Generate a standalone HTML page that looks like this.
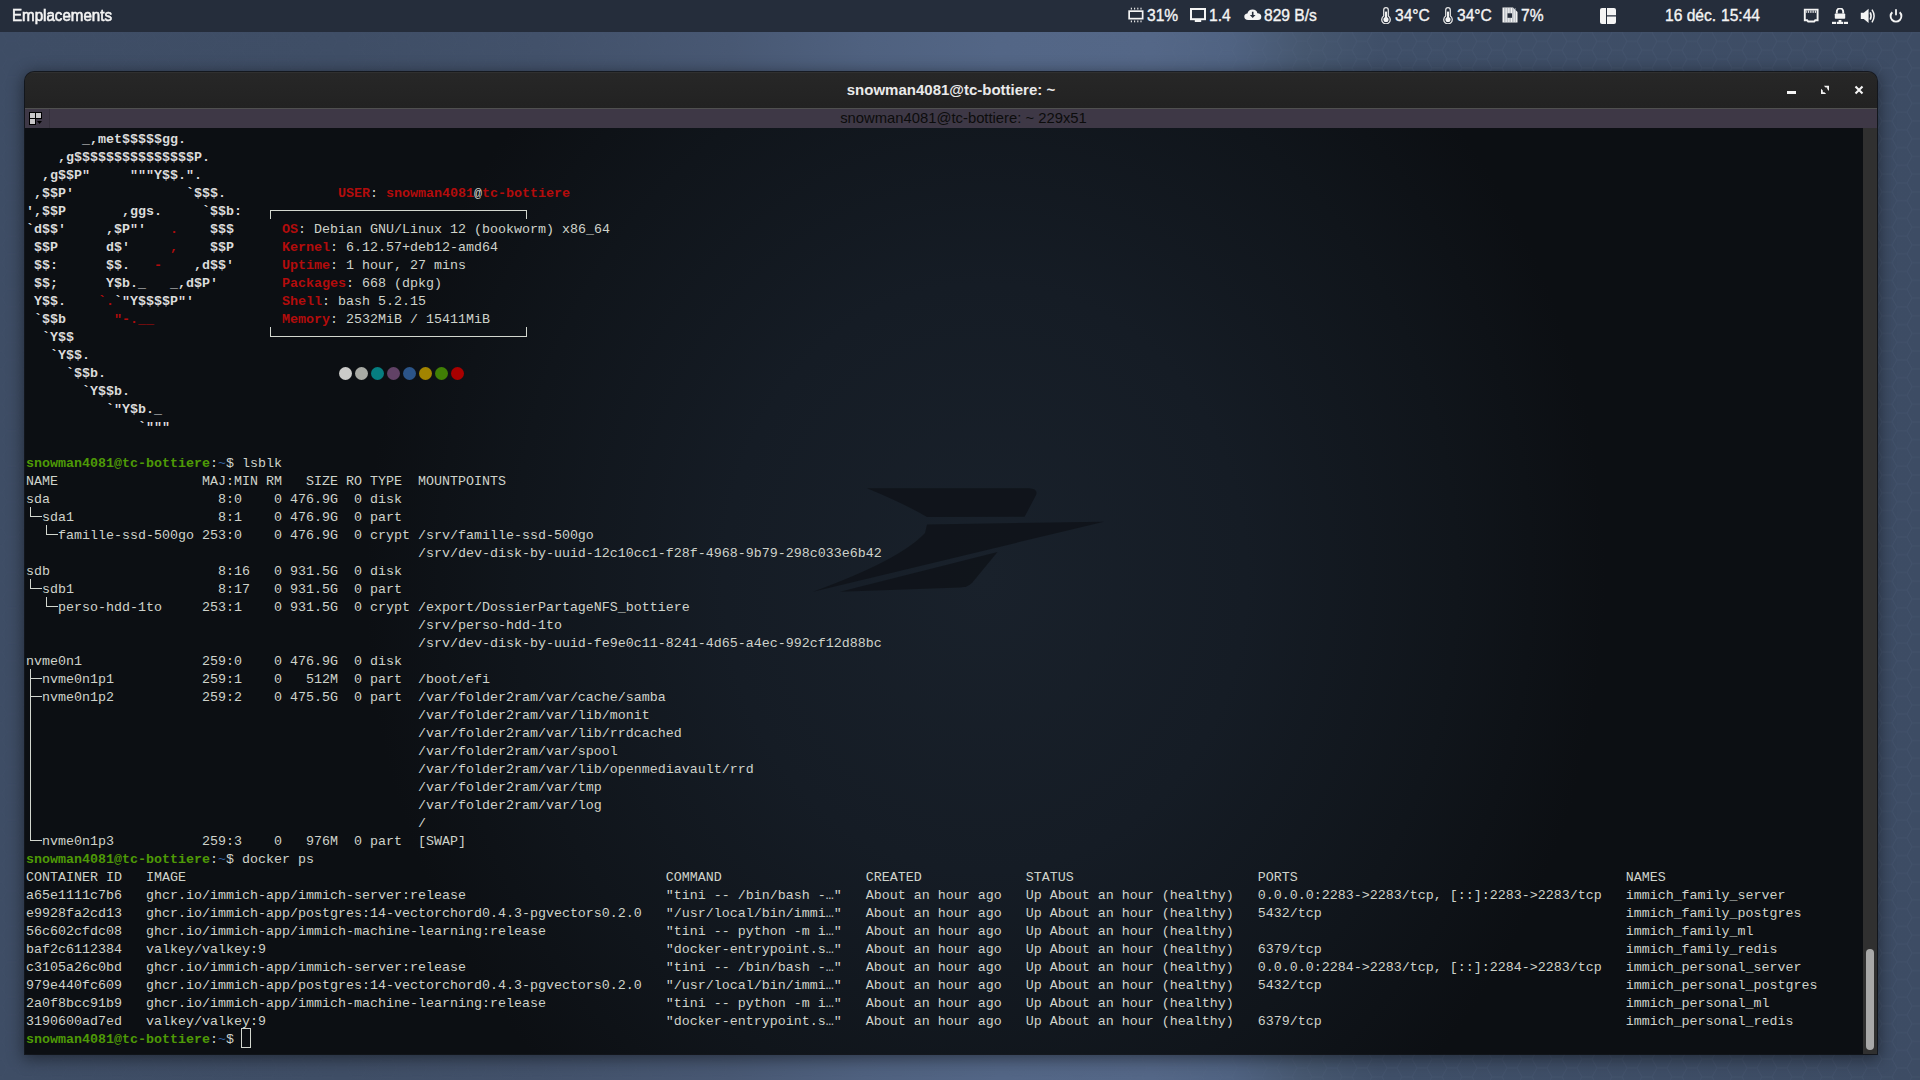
<!DOCTYPE html>
<html><head><meta charset="utf-8">
<style>
html,body{margin:0;padding:0}
body{width:1920px;height:1080px;overflow:hidden;position:relative;background:#3d4c63;font-family:"Liberation Sans",sans-serif}
#desk{position:absolute;left:0;top:0;width:1920px;height:1080px;background:linear-gradient(90deg,#3e4d65 0%,#3f4e66 18%,#42516a 28%,#485873 38%,#4f617f 45%,#536686 52%,#546787 60%,#506382 64%,#46576f 68%,#3f4f68 72%,#3d4c64 100%)}
#top{position:absolute;left:0;top:0;width:1920px;height:32px;background:#252d3b;color:#f4f4f4;font-size:15.6px;font-weight:normal}
#top .t{position:absolute;top:0;line-height:31px;white-space:nowrap;-webkit-text-stroke:0.35px #f4f4f4}
#top svg{position:absolute}
#win{position:absolute;left:25px;top:72px;width:1852px;height:982px;border-radius:9px 9px 0 0;background:#242424;box-shadow:0 3px 16px 2px rgba(0,0,0,.45), 0 0 0 1px rgba(10,10,12,.7);overflow:hidden}
#title{position:absolute;left:0;top:0;width:100%;height:36px;background:linear-gradient(#272727,#222222);border-top:1px solid #303030;box-sizing:border-box}
#title .tt{position:absolute;left:0;width:1852px;top:-1px;text-align:center;line-height:36px;color:#eaeaea;font-weight:bold;font-size:15px}
#tab{position:absolute;left:0;top:36px;width:100%;height:20px;background:#3e3846;border-top:1px solid #505050;box-sizing:border-box}
#tab .tt{position:absolute;left:0;width:1877px;text-align:center;top:0;line-height:19px;color:#0c0c0c;font-size:14.8px}
#term{position:absolute;left:0;top:56px;width:1838px;height:926px;background:radial-gradient(ellipse 620px 700px at 960px 450px,#19212b 0%,#151c25 42%,#10151b 76%,#0c0f13 100%)}
#sb{position:absolute;left:1838px;top:56px;width:14px;height:926px;background:#303030}
#thumb{position:absolute;left:3px;top:821px;width:8px;height:101px;border-radius:4px;background:#a8a8a8}
pre{position:absolute;left:1px;top:3px;margin:0;font-family:"Liberation Mono",monospace;font-size:13.33px;line-height:18px;color:#cfd3cb;white-space:pre}
.r{color:#b30c0c}.rb{color:#b30c0c;font-weight:bold}.lb{color:#dcdcdc;font-weight:bold}.gb{color:#4e9a06;font-weight:bold}.bl{color:#3465a4}
.ln{position:absolute;background:#d3d7cf}
.dot{position:absolute;top:238px;width:14px;height:14px;border-radius:50%}
#cur{position:absolute;left:217px;top:902px;width:10px;height:17px;border:1px solid #d3d7cf;box-sizing:border-box}
</style></head><body>
<div id="desk"></div>
<svg style="position:absolute;left:0;top:0;-webkit-mask-image:linear-gradient(90deg,rgba(0,0,0,.25) 0%,rgba(0,0,0,.25) 55%,#000 72%);mask-image:linear-gradient(90deg,rgba(0,0,0,.25) 0%,rgba(0,0,0,.25) 55%,#000 72%)" width="1920" height="1080"><defs><pattern id="hx" x="2" y="6" width="30" height="17.7" patternUnits="userSpaceOnUse"><path d="M0 8.85 L5 0 H15 L20 8.85 L15 17.7 H5 Z M20 8.85 H30" fill="none" stroke="#6a80a0" stroke-opacity="0.12" stroke-width="1"/></pattern></defs><rect width="1920" height="1080" fill="url(#hx)"/></svg>
<div id="top">
 <span class="t" style="left:12px;font-size:16px;-webkit-text-stroke:0.6px #f4f4f4;transform:scaleX(0.945);transform-origin:0 0">Emplacements</span>
<svg style="left:1128px;top:7px" width="16" height="16" viewBox="0 0 16 16"><rect x="1.15" y="4.15" width="13.5" height="7.5" fill="none" stroke="#f4f4f4" stroke-width="1.7"/><rect x="2.8" y="0.7" width="1.2" height="1.8" fill="#e0e0e0"/><rect x="2.8" y="13.5" width="1.2" height="1.8" fill="#e0e0e0"/><rect x="6" y="0.7" width="1.2" height="1.8" fill="#e0e0e0"/><rect x="6" y="13.5" width="1.2" height="1.8" fill="#e0e0e0"/><rect x="9.2" y="0.7" width="1.2" height="1.8" fill="#e0e0e0"/><rect x="9.2" y="13.5" width="1.2" height="1.8" fill="#e0e0e0"/><rect x="12.4" y="0.7" width="1.2" height="1.8" fill="#e0e0e0"/><rect x="12.4" y="13.5" width="1.2" height="1.8" fill="#e0e0e0"/></svg>
<svg style="left:1190px;top:8px" width="16" height="14" viewBox="0 0 16 14"><rect x="1" y="1" width="14" height="10.2" fill="none" stroke="#f4f4f4" stroke-width="2"/><rect x="4.8" y="11.5" width="6.4" height="2.5" fill="#f4f4f4"/></svg>
<svg style="left:1244px;top:9px" width="18" height="12" viewBox="0 0 18 12"><path d="M4.2 11 Q0.3 11 0.3 7.6 Q0.3 4.6 3.4 4.4 Q4.4 0.6 8.6 0.6 Q12.6 0.6 13.4 4.2 Q17.3 4.4 17.3 7.8 Q17.3 11 14 11 Z" fill="#f4f4f4"/><path d="M7.9 2.7 h1.6 v3.3 h2 l-2.8 3 l-2.8 -3 h2 Z" fill="#252d3b"/></svg>
<svg style="left:1381px;top:6.5px" width="10" height="17" viewBox="0 0 10 17"><path d="M2.7 9 V3 A2.3 2.3 0 0 1 7.3 3 V9 A4.25 4.25 0 1 1 2.7 9 Z" fill="none" stroke="#e6e6e6" stroke-width="1.25"/><circle cx="5" cy="12.55" r="2.55" fill="#f6f6f6"/><rect x="4" y="4.6" width="2" height="8" fill="#f0f0f0"/></svg>
<svg style="left:1443px;top:6.5px" width="10" height="17" viewBox="0 0 10 17"><path d="M2.7 9 V3 A2.3 2.3 0 0 1 7.3 3 V9 A4.25 4.25 0 1 1 2.7 9 Z" fill="none" stroke="#e6e6e6" stroke-width="1.25"/><circle cx="5" cy="12.55" r="2.55" fill="#f6f6f6"/><rect x="4" y="4.6" width="2" height="8" fill="#f0f0f0"/></svg>
<svg style="left:1502px;top:7px" width="16" height="16" viewBox="0 0 16 16"><path d="M0.5 0.5 H11 L15.5 5 V15.5 H0.5 Z" fill="#f4f4f4"/><rect x="2" y="1" width="0.6" height="14" fill="#9aa0aa"/><rect x="3.6" y="1" width="0.6" height="14" fill="#9aa0aa"/><rect x="5.2" y="1" width="0.6" height="14" fill="#9aa0aa"/><rect x="6.8" y="1" width="0.6" height="14" fill="#9aa0aa"/><rect x="8.4" y="1" width="0.6" height="14" fill="#9aa0aa"/><rect x="10" y="1" width="0.6" height="14" fill="#9aa0aa"/><rect x="11.6" y="1" width="0.6" height="14" fill="#9aa0aa"/><rect x="13.2" y="1" width="0.6" height="14" fill="#9aa0aa"/><rect x="5.5" y="6.3" width="4.5" height="4.5" fill="#252d3b"/></svg>
<svg style="left:1600px;top:8px" width="16" height="16" viewBox="0 0 16 16"><path d="M2 0 H6 V16 H2 Q0 16 0 14 V2 Q0 0 2 0 Z" fill="#f4f4f4"/><path d="M7 0 H14 Q16 0 16 2 V7.2 H7 Z" fill="#f4f4f4"/><path d="M7 8.5 H16 V14 Q16 16 14 16 H7 Z" fill="#f4f4f4"/></svg>
<svg style="left:1803px;top:8px" width="16" height="15" viewBox="0 0 16 15"><path d="M1.8 1.6 H14.6 V12.3 H12.2 L11.2 13.5 H5.2 L4.2 12.3 H1.8 Z" fill="none" stroke="#f4f4f4" stroke-width="1.9"/><rect x="3.3" y="2.5" width="0.9" height="2.4" fill="#f4f4f4"/><rect x="5.05" y="2.5" width="0.9" height="2.4" fill="#f4f4f4"/><rect x="6.8" y="2.5" width="0.9" height="2.4" fill="#f4f4f4"/><rect x="8.55" y="2.5" width="0.9" height="2.4" fill="#f4f4f4"/><rect x="10.3" y="2.5" width="0.9" height="2.4" fill="#f4f4f4"/><rect x="12.05" y="2.5" width="0.9" height="2.4" fill="#f4f4f4"/></svg>
<svg style="left:1832px;top:8px" width="16" height="16" viewBox="0 0 16 16"><path d="M4.8 5.6 V3.6 a3.2 3.2 0 0 1 6.4 0 V5.6" fill="none" stroke="#f4f4f4" stroke-width="1.9"/><rect x="2.8" y="5.4" width="10.4" height="5.4" rx="0.8" fill="#f4f4f4"/><rect x="0" y="13.8" width="4.2" height="2.2" fill="#f4f4f4"/><rect x="5" y="13.8" width="6" height="2.2" fill="#f4f4f4"/><rect x="6.6" y="12" width="2.8" height="2" fill="#f4f4f4"/><rect x="11.8" y="13.8" width="4.2" height="2.2" fill="#f4f4f4"/></svg>
<svg style="left:1860px;top:8px" width="16" height="16" viewBox="0 0 16 16"><path d="M0.8 4.8 H3.8 L8.6 0.8 V15 L3.8 11 H0.8 Z" fill="#f4f4f4"/><path d="M10.2 4.3 Q12 8 10.2 11.7" fill="none" stroke="#f4f4f4" stroke-width="1.6"/><path d="M12 1.6 Q16.2 8 12 14.4" fill="none" stroke="#f4f4f4" stroke-width="1.5"/></svg>
<svg style="left:1889px;top:8px" width="14" height="15" viewBox="0 0 14 15"><path d="M3.3 4.3 A5.4 5.4 0 1 0 10.7 4.3" fill="none" stroke="#f4f4f4" stroke-width="1.9"/><rect x="6.1" y="1" width="1.8" height="6.5" rx="0.9" fill="#f4f4f4"/></svg>
<span class="t" style="left:1147px">31%</span>
<span class="t" style="left:1209px">1.4</span>
<span class="t" style="left:1264px">829 B/s</span>
<span class="t" style="left:1395px">34°C</span>
<span class="t" style="left:1457px">34°C</span>
<span class="t" style="left:1521px">7%</span>
<span class="t" style="left:1665px">16 déc.</span>
<span class="t" style="left:1721px">15:44</span>
</div>
<div id="win">
 <div id="title"><div class="tt">snowman4081@tc-bottiere: ~</div>
<svg style="position:absolute;left:0;top:-2px" width="1852" height="37" viewBox="25 71 1852 37">
<rect x="1787" y="91" width="9" height="3" fill="#f4f4f4"/>
<polygon points="1823.8,85.7 1829,85.7 1829,90.9 1827.2,89.1 1827.2,87.5 1825.6,87.5" fill="#f4f4f4"/>
<polygon points="1821,88.8 1822.8,90.6 1822.8,92.2 1824.4,92.2 1826.2,94 1821,94" fill="#f4f4f4"/>
<path d="M1855.5 86.5 L1862.5 93.5 M1862.5 86.5 L1855.5 93.5" stroke="#f4f4f4" stroke-width="2.1"/>
</svg>
 </div>
 <div id="tab"><div class="tt">snowman4081@tc-bottiere: ~ 229x51</div>
<svg style="position:absolute;left:0;top:-1px" width="60" height="20" viewBox="25 108 60 20">
<rect x="29" y="112" width="13" height="7" fill="#000"/><rect x="29" y="112" width="7" height="13" fill="#000"/>
<rect x="30" y="113" width="5" height="5" fill="#c8c6c8"/><rect x="36" y="113" width="5" height="5" fill="#c8c6c8"/><rect x="30" y="119" width="5" height="5" fill="#c8c6c8"/>
<path d="M37 121 H42 L39.5 124 Z" fill="#000"/>
<rect x="49" y="109" width="1" height="19" fill="#36313d"/>
</svg>
 </div>
 <div id="term">
<svg width="1839" height="926" style="position:absolute;left:0;top:0" viewBox="25 128 1839 926">
<g fill="#0f1319" fill-opacity="0.85">
<path d="M867 488.3 L1029 488.3 Q1040 489 1035 497 L1024.6 516.8 L927 517 Q905 504 867 488.3 Z"/>
<path d="M927 524.4 L1104 521.7 L813 591.7 Q900 560 925 533 Z"/>
<path d="M840 591.7 L997.5 551.9 L972 583 Q968 587 960 587.5 Z"/>
</g></svg>
<pre>       <span class="lb">_,met$$$$$gg.</span>
    <span class="lb">,g$$$$$$$$$$$$$$$P.</span>
  <span class="lb">,g$$P"     """Y$$.".</span>
 <span class="lb">,$$P'              `$$$.</span>              <span class="rb">USER</span>: <span class="rb">snowman4081</span>@<span class="rb">tc-bottiere</span>
<span class="lb">',$$P       ,ggs.     `$$b:</span>
<span class="lb">`d$$'     ,$P"'   </span><span class="rb">.    </span><span class="lb">$$$</span>      <span class="rb">OS</span>: Debian GNU/Linux 12 (bookworm) x86_64
 <span class="lb">$$P      d$'     </span><span class="rb">,    </span><span class="lb">$$P</span>      <span class="rb">Kernel</span>: 6.12.57+deb12-amd64
 <span class="lb">$$:      $$.   </span><span class="rb">-    </span><span class="lb">,d$$'</span>      <span class="rb">Uptime</span>: 1 hour, 27 mins
 <span class="lb">$$;      Y$b._   _,d$P'</span>        <span class="rb">Packages</span>: 668 (dpkg)
 <span class="lb">Y$$.    </span><span class="rb">`.</span><span class="lb">`"Y$$$$P"'</span>           <span class="rb">Shell</span>: bash 5.2.15
 <span class="lb">`$$b      </span><span class="rb">"-.__</span>                <span class="rb">Memory</span>: 2532MiB / 15411MiB
  <span class="lb">`Y$$</span>
   <span class="lb">`Y$$.</span>
     <span class="lb">`$$b.</span>
       <span class="lb">`Y$$b.</span>
          <span class="lb">`"Y$b._</span>
              <span class="lb">`"""</span>

<span class="gb">snowman4081@tc-bottiere</span>:<span class="bl">~</span>$ lsblk
NAME                  MAJ:MIN RM   SIZE RO TYPE  MOUNTPOINTS
sda                     8:0    0 476.9G  0 disk
  sda1                  8:1    0 476.9G  0 part
    famille-ssd-500go 253:0    0 476.9G  0 crypt /srv/famille-ssd-500go
                                                 /srv/dev-disk-by-uuid-12c10cc1-f28f-4968-9b79-298c033e6b42
sdb                     8:16   0 931.5G  0 disk
  sdb1                  8:17   0 931.5G  0 part
    perso-hdd-1to     253:1    0 931.5G  0 crypt /export/DossierPartageNFS_bottiere
                                                 /srv/perso-hdd-1to
                                                 /srv/dev-disk-by-uuid-fe9e0c11-8241-4d65-a4ec-992cf12d88bc
nvme0n1               259:0    0 476.9G  0 disk
  nvme0n1p1           259:1    0   512M  0 part  /boot/efi
  nvme0n1p2           259:2    0 475.5G  0 part  /var/folder2ram/var/cache/samba
                                                 /var/folder2ram/var/lib/monit
                                                 /var/folder2ram/var/lib/rrdcached
                                                 /var/folder2ram/var/spool
                                                 /var/folder2ram/var/lib/openmediavault/rrd
                                                 /var/folder2ram/var/tmp
                                                 /var/folder2ram/var/log
                                                 /
  nvme0n1p3           259:3    0   976M  0 part  [SWAP]
<span class="gb">snowman4081@tc-bottiere</span>:<span class="bl">~</span>$ docker ps
CONTAINER ID   IMAGE                                                            COMMAND                  CREATED             STATUS                       PORTS                                         NAMES
a65e1111c7b6   ghcr.io/immich-app/immich-server:release                         "tini -- /bin/bash -…"   About an hour ago   Up About an hour (healthy)   0.0.0.0:2283-&gt;2283/tcp, [::]:2283-&gt;2283/tcp   immich_family_server
e9928fa2cd13   ghcr.io/immich-app/postgres:14-vectorchord0.4.3-pgvectors0.2.0   "/usr/local/bin/immi…"   About an hour ago   Up About an hour (healthy)   5432/tcp                                      immich_family_postgres
56c602cfdc08   ghcr.io/immich-app/immich-machine-learning:release               "tini -- python -m i…"   About an hour ago   Up About an hour (healthy)                                                 immich_family_ml
baf2c6112384   valkey/valkey:9                                                  "docker-entrypoint.s…"   About an hour ago   Up About an hour (healthy)   6379/tcp                                      immich_family_redis
c3105a26c0bd   ghcr.io/immich-app/immich-server:release                         "tini -- /bin/bash -…"   About an hour ago   Up About an hour (healthy)   0.0.0.0:2284-&gt;2283/tcp, [::]:2284-&gt;2283/tcp   immich_personal_server
979e440fc609   ghcr.io/immich-app/postgres:14-vectorchord0.4.3-pgvectors0.2.0   "/usr/local/bin/immi…"   About an hour ago   Up About an hour (healthy)   5432/tcp                                      immich_personal_postgres
2a0f8bcc91b9   ghcr.io/immich-app/immich-machine-learning:release               "tini -- python -m i…"   About an hour ago   Up About an hour (healthy)                                                 immich_personal_ml
3190600ad7ed   valkey/valkey:9                                                  "docker-entrypoint.s…"   About an hour ago   Up About an hour (healthy)   6379/tcp                                      immich_personal_redis
<span class="gb">snowman4081@tc-bottiere</span>:<span class="bl">~</span>$ </pre>
<div class="ln" style="left:5px;top:379px;width:1px;height:10px;background:#d3d7cf"></div>
<div class="ln" style="left:5px;top:388px;width:12px;height:1px;background:#d3d7cf"></div>
<div class="ln" style="left:21px;top:397px;width:1px;height:10px;background:#d3d7cf"></div>
<div class="ln" style="left:21px;top:406px;width:12px;height:1px;background:#d3d7cf"></div>
<div class="ln" style="left:5px;top:451px;width:1px;height:10px;background:#d3d7cf"></div>
<div class="ln" style="left:5px;top:460px;width:12px;height:1px;background:#d3d7cf"></div>
<div class="ln" style="left:21px;top:469px;width:1px;height:10px;background:#d3d7cf"></div>
<div class="ln" style="left:21px;top:478px;width:12px;height:1px;background:#d3d7cf"></div>
<div class="ln" style="left:5px;top:541px;width:1px;height:18px;background:#d3d7cf"></div>
<div class="ln" style="left:5px;top:550px;width:12px;height:1px;background:#d3d7cf"></div>
<div class="ln" style="left:5px;top:559px;width:1px;height:18px;background:#d3d7cf"></div>
<div class="ln" style="left:5px;top:568px;width:12px;height:1px;background:#d3d7cf"></div>
<div class="ln" style="left:5px;top:577px;width:1px;height:18px;background:#d3d7cf"></div>
<div class="ln" style="left:5px;top:595px;width:1px;height:18px;background:#d3d7cf"></div>
<div class="ln" style="left:5px;top:613px;width:1px;height:18px;background:#d3d7cf"></div>
<div class="ln" style="left:5px;top:631px;width:1px;height:18px;background:#d3d7cf"></div>
<div class="ln" style="left:5px;top:649px;width:1px;height:18px;background:#d3d7cf"></div>
<div class="ln" style="left:5px;top:667px;width:1px;height:18px;background:#d3d7cf"></div>
<div class="ln" style="left:5px;top:685px;width:1px;height:18px;background:#d3d7cf"></div>
<div class="ln" style="left:5px;top:703px;width:1px;height:10px;background:#d3d7cf"></div>
<div class="ln" style="left:5px;top:712px;width:12px;height:1px;background:#d3d7cf"></div>
<div class="ln" style="left:245px;top:82px;width:257px;height:1px;background:#d3d7cf"></div>
<div class="ln" style="left:245px;top:208px;width:257px;height:1px;background:#d3d7cf"></div>
<div class="ln" style="left:245px;top:82px;width:1px;height:9px;background:#d3d7cf"></div>
<div class="ln" style="left:501px;top:82px;width:1px;height:9px;background:#d3d7cf"></div>
<div class="ln" style="left:245px;top:199px;width:1px;height:10px;background:#d3d7cf"></div>
<div class="ln" style="left:501px;top:199px;width:1px;height:10px;background:#d3d7cf"></div>
<div class="dot" style="left:313.7px;top:238.8px;width:13.6px;height:13.6px;background:#cbcbc9"></div>
<div class="dot" style="left:329.7px;top:238.8px;width:13.6px;height:13.6px;background:#a9aba5"></div>
<div class="dot" style="left:345.7px;top:238.8px;width:13.6px;height:13.6px;background:#067e80"></div>
<div class="dot" style="left:361.7px;top:238.8px;width:13.6px;height:13.6px;background:#614266"></div>
<div class="dot" style="left:377.7px;top:238.8px;width:13.6px;height:13.6px;background:#2b5488"></div>
<div class="dot" style="left:393.7px;top:238.8px;width:13.6px;height:13.6px;background:#a28400"></div>
<div class="dot" style="left:409.7px;top:238.8px;width:13.6px;height:13.6px;background:#408005"></div>
<div class="dot" style="left:425.7px;top:238.8px;width:13.6px;height:13.6px;background:#a90000"></div>
<div id="cur" style="left:216px;top:900px;width:10px;height:20px"></div>
 </div>
 <div id="sb"><div id="thumb"></div></div>
</div>
</body></html>
